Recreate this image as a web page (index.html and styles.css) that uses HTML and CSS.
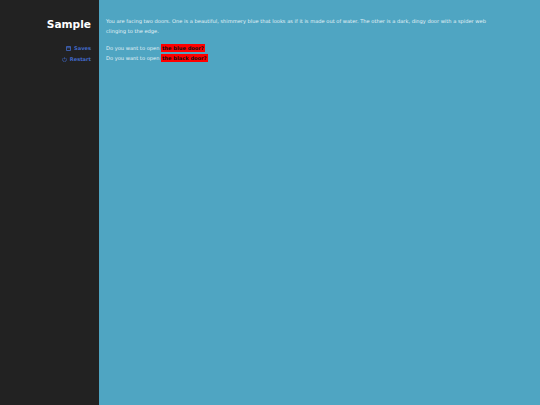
FILE: index.html
```html
<!DOCTYPE html>
<html lang="en">
<head>
<meta charset="UTF-8">
<title>Sample</title>
<link rel="stylesheet" href="styles.css">
</head>
<body>

<div class="sidebar">
  <h1>Sample</h1>
  <a class="menu-link" href="#">
    <svg class="menu-icon" viewBox="0 0 10 10" width="5" height="5"><path d="M1 1h8v8h-8zM1 3.5h8" fill="none" stroke="currentColor" stroke-width="1.6"/></svg>
    Saves
  </a>
  <a class="menu-link" href="#">
    <svg class="menu-icon" viewBox="0 0 10 10" width="5" height="5"><path d="M2.8 2a4 4 0 1 0 4.4 0M5 .5v4" fill="none" stroke="currentColor" stroke-width="1.3"/></svg>
    Restart
  </a>
</div>

<div class="content">
  <p>You are facing two doors. One is a beautiful, shimmery blue that looks as if it is made out of water. The other is a dark, dingy door with a spider web clinging to the edge.</p>
  <p class="choices">
    Do you want to open <a class="door" href="#">the blue door?</a><br>
    Do you want to open <a class="door" href="#">the black door?</a>
  </p>
</div>

</body>
</html>
```

FILE: styles.css
```css
body, html {
  height: 100%;
  margin: 0;
  font-family: "DejaVu Sans", sans-serif;
}
body {
  display: flex;
  background-color: #4fa5c2;
  overflow: hidden;
}
.sidebar {
  background-color: #222;
  width: 99px;
  height: 100%;
  flex-shrink: 0;
  box-sizing: border-box;
  padding: 17px 8px 0 0;
  text-align: right;
}
.sidebar h1 {
  margin: 0 0 11px;
  font-size: 10.6px;
  line-height: 15px;
  color: #fff;
}
.menu-link {
  display: block;
  font-size: 5.1px;
  font-weight: bold;
  line-height: 11px;
  color: #4169c8;
  text-decoration: none;
}
.menu-icon {
  vertical-align: -0.5px;
  margin-right: 1px;
}
.content {
  flex: 1;
  padding: 17px 40px 0 7px;
  font-size: 5.12px;
  line-height: 9.6px;
  color: #e4f2f7;
}
.content p {
  margin: 0 0 8px;
}
.door {
  background-color: #f00;
  color: #111;
  font-weight: bold;
  text-decoration: none;
  padding: 1px;
}
```
